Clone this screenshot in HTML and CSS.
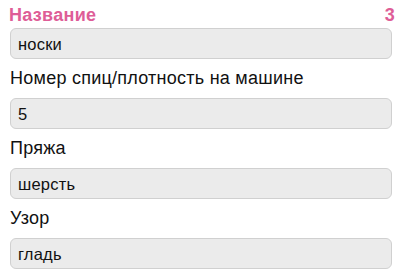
FILE: index.html
```html
<!DOCTYPE html>
<html lang="ru">
<head>
<meta charset="utf-8">
<link rel="stylesheet" href="styles.css">
</head>
<body>
<div class="form">
  <div class="title-row">
    <span class="title">Название</span>
    <span class="count">3</span>
  </div>
  <div class="field first">носки</div>
  <div class="label">Номер спиц/плотность на машине</div>
  <div class="field">5</div>
  <div class="label">Пряжа</div>
  <div class="field">шерсть</div>
  <div class="label">Узор</div>
  <div class="field">гладь</div>
</div>
</body>
</html>
```
FILE: styles.css
```css
html, body {
  margin: 0;
  padding: 0;
  background: #ffffff;
}
body {
  font-family: "Liberation Sans", Arial, sans-serif;
  color: #111111;
}
.form {
  display: flex;
  flex-direction: column;
  padding: 5px 5px 0 10px;
}
.title-row {
  display: flex;
  justify-content: space-between;
  align-items: baseline;
  font-size: 18px;
  line-height: 20px;
  font-weight: bold;
  letter-spacing: 0.3px;
  color: #de5d97;
  margin-left: -1px;
}
.field {
  box-sizing: border-box;
  height: 31px;
  margin-right: 3px;
  border: 1px solid #d0d0d0;
  border-radius: 6px;
  background: #ebebeb;
  font-size: 16.5px;
  line-height: 29px;
  letter-spacing: 0.2px;
  padding: 1px 7px 0;
}
.field.first {
  margin-top: 3px;
}
.label {
  font-size: 18px;
  line-height: 20px;
  letter-spacing: 0.25px;
  margin: 9px 0 10px;
}
```
